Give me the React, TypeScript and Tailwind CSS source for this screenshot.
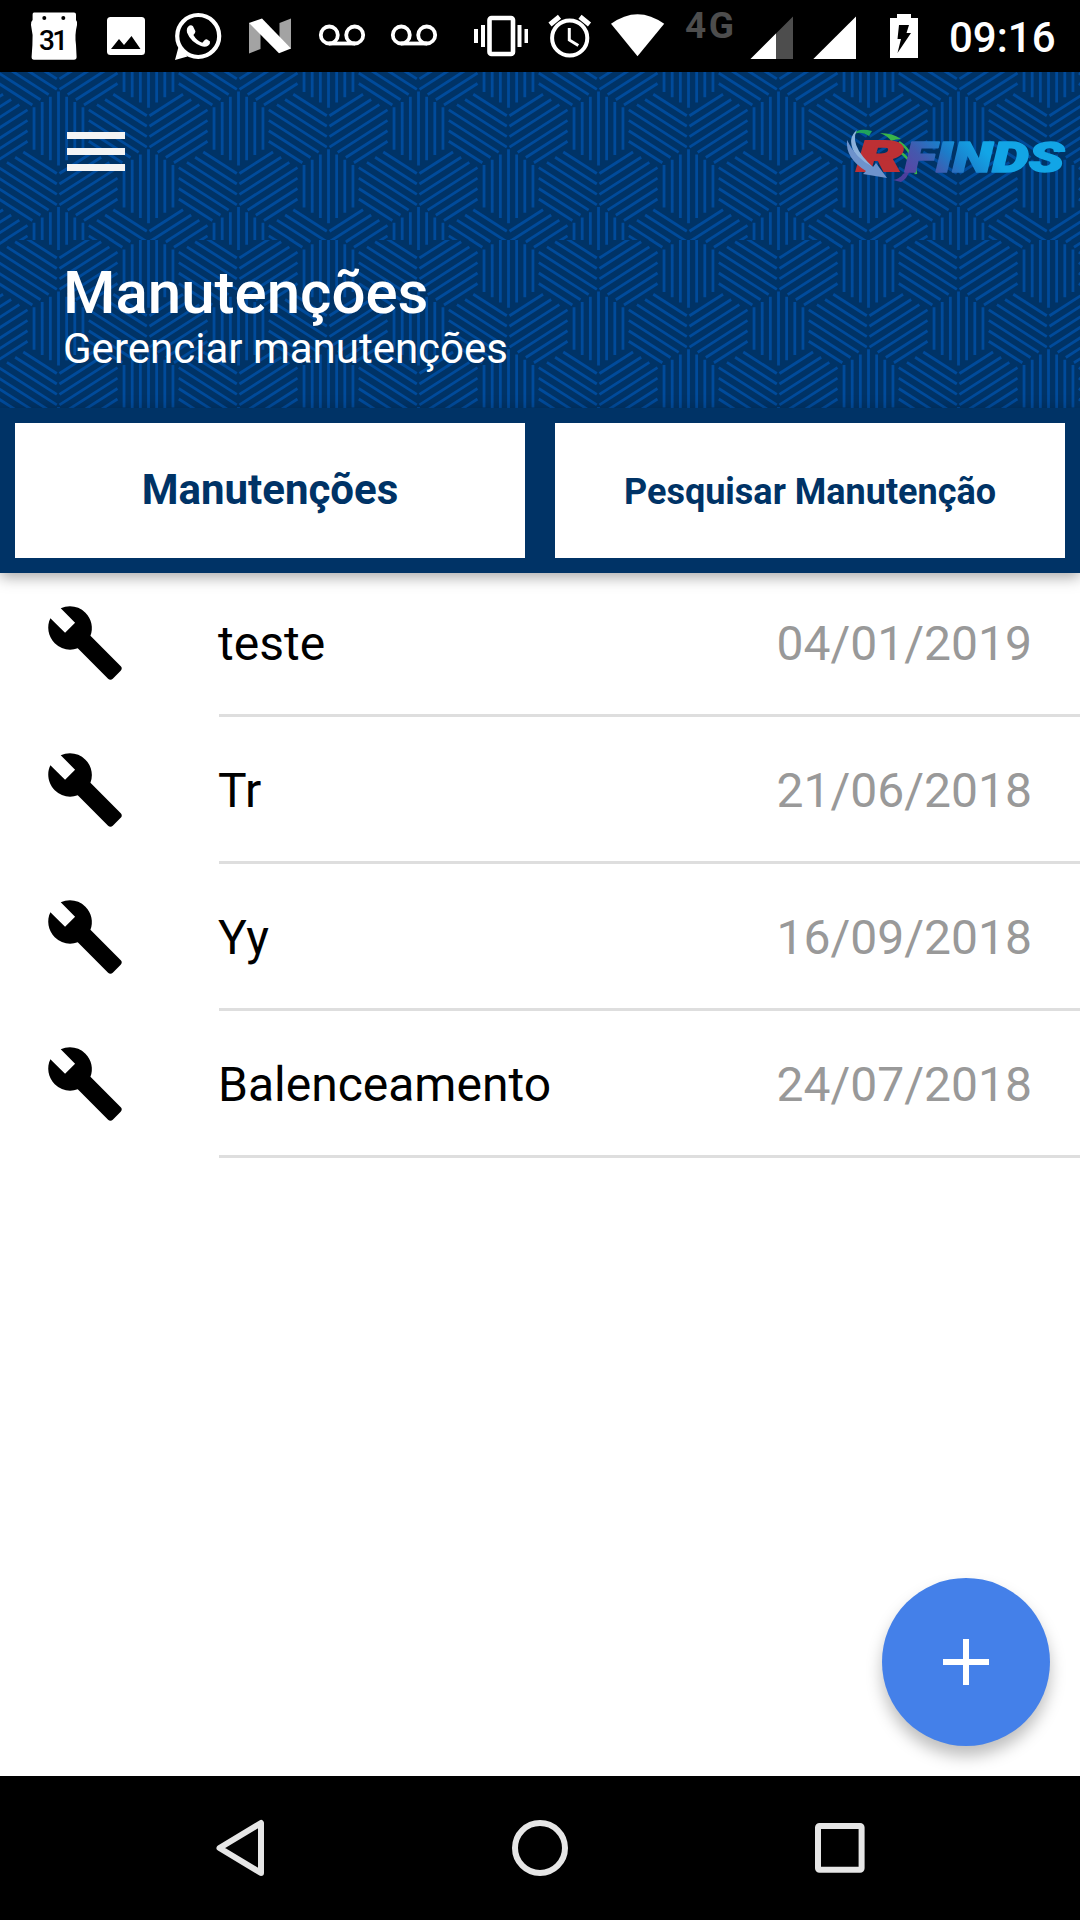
import React from 'react';
import { IoMdBuild } from 'react-icons/io';

interface Maintenance {
  id: number;
  name: string;
  date: string;
}

const maintenances: Maintenance[] = [
  { id: 1, name: 'teste', date: '04/01/2019' },
  { id: 2, name: 'Tr', date: '21/06/2018' },
  { id: 3, name: 'Yy', date: '16/09/2018' },
  { id: 4, name: 'Balenceamento', date: '24/07/2018' },
];

// Weave pattern: three blocks of 7 lines (vertical, falling, rising) on a 180 x 115.5 lattice
const SLOPE = 0.6417;

const weaveCell = (cx: number, cy: number) => {
  const out: string[] = [];
  for (let k = -3; k <= 3; k++) {
    const a = Math.abs(k) * 8.15;
    const x = cx + k * 8.15;
    const half = 37 - a * SLOPE;
    out.push(`M${x} ${cy - half}V${cy + half}`);

    const from = -29 + (k < 0 ? a : 0);
    const to = 29 - (k > 0 ? a : 0);
    const dy = k * 10.45;
    const l = cx + 59.3;
    const r = cx + 120;
    out.push(`M${l + from} ${cy + dy + from * SLOPE}L${l + to} ${cy + dy + to * SLOPE}`);
    out.push(`M${r - from} ${cy + dy + from * SLOPE}L${r - to} ${cy + dy + to * SLOPE}`);
  }
  return out.join('');
};

const weavePath = (startY: number) => {
  let d = '';
  for (let i = -2; i <= 6; i++) {
    for (let j = -2; j <= 2; j++) {
      d += weaveCell(58.5 + i * 180, startY + j * 115.5);
      d += weaveCell(148.5 + i * 180, startY + 57.75 + j * 115.5);
    }
  }
  return d;
};

const WeaveStrip = ({ startY }: { startY: number }) => (
  <svg className="block" width="1080" height="168" viewBox="0 0 1080 168" fill="none">
    <path d={weavePath(startY)} stroke="#004b9b" strokeWidth="2.8" />
  </svg>
);

const VoicemailIcon = ({ className }: { className: string }) => (
  <svg className={className} width="48" height="72" viewBox="0 0 48 72" fill="none" stroke="#fff" strokeWidth="3.8">
    <circle cx="11.3" cy="35" r="8.5" />
    <circle cx="36.7" cy="35" r="8.5" />
    <path d="M11 43.5H37" />
  </svg>
);

const StatusBar = () => (
  <div className="h-[72px] bg-black flex items-start">
    {/* Notifications */}
    <svg className="ml-[30px]" width="48" height="72" viewBox="30 0 48 72">
      <path d="M34 12.5H74Q76 12.5 76 14.5V20Q77.8 22 77 25Q74.5 35 76 45L76.6 57Q76.6 59.8 74 59.8H34Q31.6 59.8 31.6 57L32.4 45Q33.5 35 31 25Q30.4 22 32.6 20V14.5Q32.6 12.5 34 12.5Z" fill="#fff" />
      <circle cx="44.3" cy="18" r="2" fill="#000" />
      <circle cx="63.3" cy="18" r="2" fill="#000" />
      <text x="53.6" y="50" textAnchor="middle" fontFamily="Roboto, sans-serif" fontWeight="500" fontSize="28" textLength="29">31</text>
    </svg>
    <svg className="ml-7" width="40" height="72" viewBox="106 0 40 72">
      <rect x="107" y="17" width="38" height="38" rx="3.5" fill="#fff" />
      <path d="M111 49L119 39L124 45L131.5 36L140.5 49Z" fill="#000" />
    </svg>
    <svg className="ml-7" width="48" height="72" viewBox="174 0 48 72">
      <circle cx="198.2" cy="36" r="21" fill="none" stroke="#fff" strokeWidth="4.2" />
      <path d="M175 60L178.5 47L187.5 56.6Z" fill="#fff" />
      <path d="M189.5 25.5Q191.5 24.6 193 26.2L195.4 31.2Q195.6 32.8 193.4 35Q196.6 40.6 202.3 42.8L205 39.8Q206 39 207.2 39.6L210 41.6Q210.6 43.8 208 45.8Q205.2 47.4 201 46Q190.6 42 187 32.6Q186 27.6 189.5 25.5Z" fill="#fff" />
    </svg>
    <svg className="ml-[26px]" width="44" height="72" viewBox="248 0 44 72">
      <path d="M249 22.5L260.5 33V49L249 53.5Z" fill="#a3a3a3" />
      <path d="M279.5 23L291 18.5V49L279.5 40Z" fill="#a3a3a3" />
      <path d="M249 23L262 18.5L291 48.5L279 53.3Z" fill="#fff" />
    </svg>
    <VoicemailIcon className="ml-[26px]" />
    <VoicemailIcon className="ml-6" />

    {/* System */}
    <svg className="ml-[35px]" width="56" height="72" viewBox="473 0 56 72">
      <rect x="489.5" y="18" width="23.5" height="36" rx="2" fill="none" stroke="#fff" strokeWidth="4.6" />
      <path d="M474 29H478V43H474ZM481 25H485V47H481ZM517.5 25H521.5V47H517.5ZM524.5 29H528V43H524.5Z" fill="#fff" />
    </svg>
    <svg className="ml-[19px]" width="44" height="72" viewBox="548 0 44 72" fill="none" stroke="#fff">
      <circle cx="569.7" cy="38" r="17.6" strokeWidth="4" />
      <path d="M550 24.5L559.5 16.8M589.5 24.5L580 16.8" strokeWidth="5" />
      <path d="M569.3 28V40L578.3 45.5" strokeWidth="3" />
    </svg>
    <svg className="ml-[18px]" width="55" height="72" viewBox="610 0 55 72">
      <path d="M611 23.8Q637.5 4.5 664.2 23.8L637.5 56.2Z" fill="#fff" />
    </svg>
    <span className="ml-[20px] w-[52px] mt-[3px] text-[37px] leading-[46px] tracking-[2.5px] font-bold text-[#4d4d4d]">4G</span>
    <svg className="ml-[13px]" width="44" height="72" viewBox="750 0 44 72">
      <path d="M793 16.5V59H750.5Z" fill="#4d4d4d" />
      <path d="M776 33.5V59H750.5Z" fill="#fff" />
    </svg>
    <svg className="ml-[19px]" width="44" height="72" viewBox="813 0 44 72">
      <path d="M856 16.5V59H813.3Z" fill="#fff" />
    </svg>
    <svg className="ml-[32px]" width="30" height="72" viewBox="889 0 30 72">
      <path d="M897 14H911V18H918V58H890V18H897Z" fill="#fff" />
      <path d="M899 25H909L906.5 33H911L897.5 53L901 39H897.5Z" fill="#000" />
    </svg>
    <span className="ml-[30px] mt-[13px] text-[42px] leading-[50px] font-medium text-white whitespace-nowrap">09:16</span>
  </div>
);

const Logo = () => (
  <svg className="block" width="234" height="62" viewBox="840 124 234 62">
    <defs>
      <linearGradient id="finds" gradientUnits="userSpaceOnUse" x1="922" y1="188" x2="972" y2="138">
        <stop offset="0" stopColor="#5a45a5" />
        <stop offset="0.3" stopColor="#4458ad" />
        <stop offset="0.6" stopColor="#1c7cc9" />
        <stop offset="1" stopColor="#12a5e6" />
      </linearGradient>
    </defs>
    <path d="M853 135Q858 127 872 131L869 136Q860 130 853 135Z" fill="#1fa45c" />
    <path d="M880 133Q893 133 901 139Q896 139 891 141Q888 136 880 133Z" fill="#39b54a" />
    <path d="M899 142Q914 152 916 174Q911 158 897 150" fill="none" stroke="#39b54a" strokeWidth="2.5" />
    <path d="M893 180L901 182Q907 179 910 170L903 174Q900 179 893 180Z" fill="#4b3f9c" />
    <text x="857" y="170.5" fontFamily="Roboto, sans-serif" fontWeight="900" fontStyle="italic" fontSize="42" textLength="46" lengthAdjust="spacingAndGlyphs" fill="#bd3034" stroke="#bd3034" strokeWidth="2">R</text>
    <path d="M857 130Q847 138 854 152Q862 167 880 173Q866 162 859 151Q852 139 857 130Z" fill="#8db2dc" />
    <path d="M847 140Q845 158 866 171L863 174L887 178L876 163L873 167Q855 158 847 140Z" fill="#6e93cc" />
    <text x="905" y="171.5" fontFamily="Roboto, sans-serif" fontWeight="900" fontStyle="italic" fontSize="43" textLength="159" lengthAdjust="spacingAndGlyphs" fill="url(#finds)" stroke="url(#finds)" strokeWidth="1.6" strokeLinejoin="round">FINDS</text>
  </svg>
);

const Header = () => (
  <header className="relative h-[336px] bg-[#003366]">
    <div className="absolute inset-0 overflow-hidden">
      <WeaveStrip startY={56.5} />
      <WeaveStrip startY={88.5} />
    </div>
    <div className="relative">
      <div className="flex items-start justify-between pl-[67px] pr-1.5 h-[190px]">
        <button className="mt-[60px] flex flex-col gap-[9px]">
          <span className="block w-[58px] h-[7px] bg-[#f4f4f4]" />
          <span className="block w-[58px] h-[7px] bg-[#f4f4f4]" />
          <span className="block w-[58px] h-[7px] bg-[#f4f4f4]" />
        </button>
        <div className="mt-[52px]"><Logo /></div>
      </div>
      <div className="pl-[63px] text-white">
        <h1 className="text-[60px] leading-[61px] font-medium">Manutenções</h1>
        <p className="mt-px text-[42px] leading-[50px]">Gerenciar manutenções</p>
      </div>
    </div>
  </header>
);

export default function App() {
  return (
    <div className="w-[1080px] h-[1920px] flex flex-col bg-white overflow-hidden font-[Roboto,sans-serif]">
      <StatusBar />
      <Header />

      {/* Tabs */}
      <div className="relative h-[165px] shrink-0 bg-[#003366] p-[15px] flex gap-[30px] font-bold text-[#003366] shadow-[0_4px_14px_rgba(0,0,0,0.35)]">
        <button className="flex-1 bg-white text-[42px] pb-[2px]">Manutenções</button>
        <button className="flex-1 bg-white text-[36px] pt-[2px]">Pesquisar Manutenção</button>
      </div>

      {/* List */}
      <main className="relative flex-1 -mt-[3px]">
        {maintenances.map(item => (
          <div key={item.id} className="h-[147px] flex items-center pl-[43px]">
            <IoMdBuild size={84} className="text-black shrink-0 -mt-px" />
            <div className="ml-[92px] flex-1 h-full flex items-center justify-between border-b-3 border-[#dedede] pt-1 pr-[48px] text-[48px]">
              <span className="text-black -ml-px">{item.name}</span>
              <span className="text-[#999999]">{item.date}</span>
            </div>
          </div>
        ))}
        <button className="absolute right-[30px] bottom-[30px] size-[168px] rounded-full bg-[#4480e9] flex items-center justify-center shadow-[0_10px_16px_rgba(0,0,0,0.26)]">
          <svg width="46" height="46" viewBox="0 0 46 46" stroke="#fff" strokeWidth="6">
            <path d="M0 23H46M23 0V46" />
          </svg>
        </button>
      </main>

      {/* Android navigation */}
      <nav className="relative h-36 shrink-0 bg-black flex items-center justify-between px-[212px]">
        <svg width="56" height="60" viewBox="212 1818 56 60" fill="none" stroke="#e6e6e6" strokeWidth="6" strokeLinejoin="round">
          <path d="M261 1823V1873L219.5 1848Z" />
        </svg>
        <svg width="60" height="60" viewBox="0 0 60 60" fill="none" stroke="#e6e6e6" strokeWidth="6">
          <circle cx="30" cy="30" r="25" />
        </svg>
        <svg width="56" height="60" viewBox="812 1818 56 60" fill="none" stroke="#e6e6e6" strokeWidth="6">
          <rect x="818" y="1826" width="43.6" height="43.8" rx="1.5" />
        </svg>
      </nav>
    </div>
  );
}
